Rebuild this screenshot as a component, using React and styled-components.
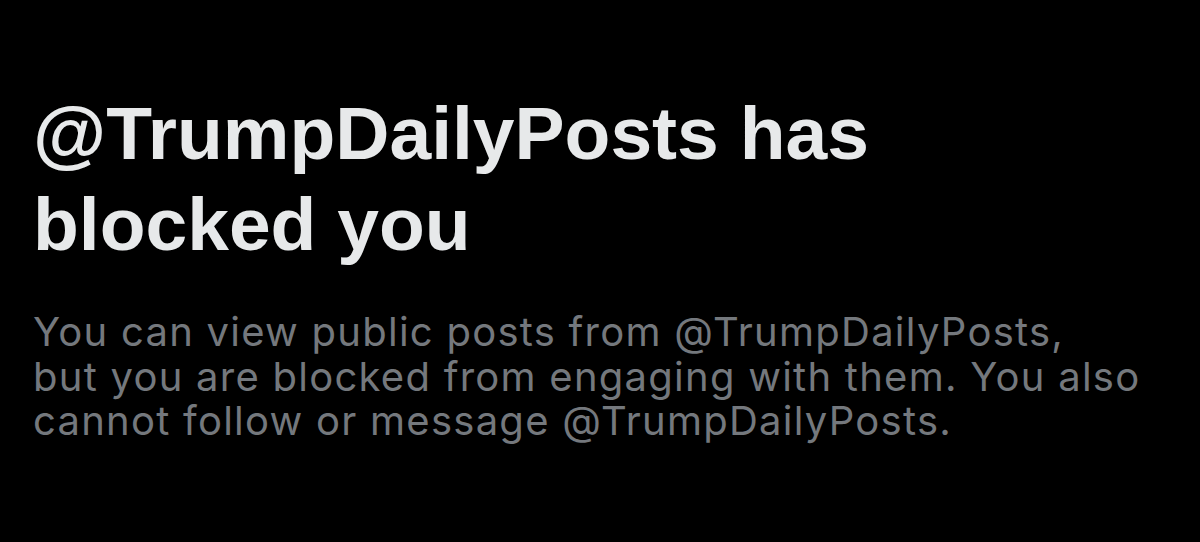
import styled, { createGlobalStyle } from "styled-components";

const GlobalStyle = createGlobalStyle`
  html, body {
    margin: 0;
    padding: 0;
    background: #000;
  }
  body {
    font-family: "Liberation Sans", Arial, sans-serif;
  }
`;

const Screen = styled.div`
  width: 1200px;
  height: 542px;
  background: #000;
  box-sizing: border-box;
  padding: 88px 33px 0 33px;
  overflow: hidden;
`;

const Title = styled.h1`
  margin: 0;
  width: 900px;
  color: #e7e9ea;
  font-size: 75px;
  font-weight: 700;
  line-height: 91px;
`;

const Message = styled.p`
  margin: 40px 0 0;
  width: 1160px;
  color: #74787d;
  font-family: Inter, "Liberation Sans", sans-serif;
  font-size: 40px;
  font-weight: 400;
  line-height: 44.5px;
  letter-spacing: 1.25px;
`;

export default function App() {
  return (
    <>
      <GlobalStyle />
      <Screen>
        <Title>@TrumpDailyPosts has blocked you</Title>
        <Message>
          You can view public posts from @TrumpDailyPosts,
          <br />
          but you are blocked from engaging with them. You also
          <br />
          cannot follow or message @TrumpDailyPosts.
        </Message>
      </Screen>
    </>
  );
}
